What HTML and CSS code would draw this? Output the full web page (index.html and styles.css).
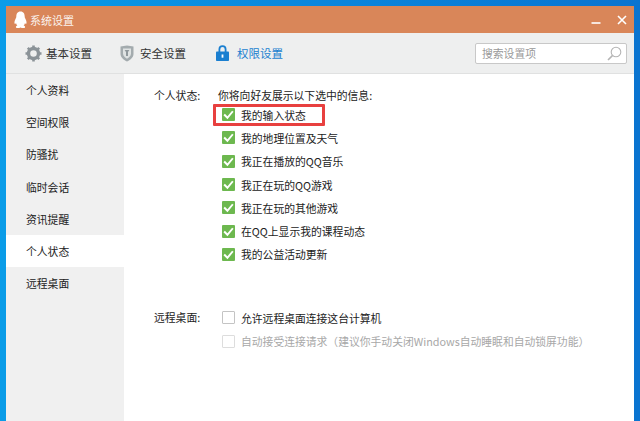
FILE: index.html
```html
<!DOCTYPE html>
<html lang="zh-CN">
  <head>
    <meta charset="UTF-8" />
    <meta name="viewport" content="width=device-width, initial-scale=1.0" />
    <title>系统设置</title>
    <link rel="stylesheet" href="styles.css">
  </head>
  <body>
    <div class="window">
      <div class="titlebar">
        <svg class="qq-logo" width="13" height="18" viewBox="0 0 13 18">
          <path d="M6.5 0.5C3.4 0.5 2.3 3 2.3 5.6C2.3 6.6 2 7 1.5 8C0.6 9.7 0.2 11.6 0.6 12.6C1 13.3 1.6 12.6 2 11.9C2.2 13 2.7 13.9 3.4 14.6C2.4 15 1.6 15.6 2 16.4C2.5 17.2 5 17.2 6.5 16.4C8 17.2 10.5 17.2 11 16.4C11.4 15.6 10.6 15 9.6 14.6C10.3 13.9 10.8 13 11 11.9C11.4 12.6 12 13.3 12.4 12.6C12.8 11.6 12.4 9.7 11.5 8C11 7 10.7 6.6 10.7 5.6C10.7 3 9.6 0.5 6.5 0.5Z" fill="#ffffff"/>
        </svg>
        <span class="title-text">系统设置</span>
        <div class="window-buttons">
          <svg width="10" height="10" viewBox="0 0 10 10"><path d="M0.5 8H9.5" stroke="#ffffff" stroke-width="1.6"/></svg>
          <svg width="10" height="10" viewBox="0 0 10 10"><path d="M1 1L9 9M9 1L1 9" stroke="#ffffff" stroke-width="1.6"/></svg>
        </div>
      </div>

      <div class="toolbar">
        <div class="tab tab-basic">
          <svg width="17" height="17" viewBox="0 0 17 17">
            <circle cx="8.5" cy="8.5" r="5" fill="none" stroke="#8b9398" stroke-width="3.4"/>
            <path d="M8.5 0.5V3M8.5 14V16.5M0.5 8.5H3M14 8.5H16.5M2.8 2.8L4.6 4.6M12.4 12.4L14.2 14.2M14.2 2.8L12.4 4.6M4.6 12.4L2.8 14.2" stroke="#8b9398" stroke-width="2.6"/>
          </svg>
          <span>基本设置</span>
        </div>
        <div class="tab tab-safe">
          <svg width="14" height="17" viewBox="0 0 14 17">
            <path d="M0.5 1.5L7 0.5L13.5 1.5V9C13.5 12.5 10 15 7 16.5C4 15 0.5 12.5 0.5 9Z" fill="#a3abae"/>
            <path d="M3 3.5H11V8.5C11 10.8 9 12.6 7 13.7C5 12.6 3 10.8 3 8.5Z" fill="#dfe3e3"/>
            <path d="M4.6 5H9.4L8 7V11H6V7Z" fill="#8f989c"/>
          </svg>
          <span>安全设置</span>
        </div>
        <div class="tab tab-active">
          <svg width="13" height="16" viewBox="0 0 13 16">
            <path d="M3.4 7V4.2C3.4 2.4 4.7 1.2 6.5 1.2S9.6 2.4 9.6 4.2V7" fill="none" stroke="#1a7fd0" stroke-width="1.8"/>
            <rect x="0" y="6.5" width="13" height="9.5" rx="0.8" fill="#1a7fd0"/>
            <rect x="5.6" y="9.5" width="1.8" height="3.2" fill="#ffffff"/>
          </svg>
          <span>权限设置</span>
        </div>
        <div class="search">
          <span>搜索设置项</span>
          <svg width="15" height="15" viewBox="0 0 15 15">
            <circle cx="9" cy="6" r="4.8" fill="none" stroke="#b4b4b4" stroke-width="1.1"/>
            <path d="M5.4 9.6L1 14" stroke="#b4b4b4" stroke-width="1.6"/>
          </svg>
        </div>
      </div>

      <div class="main">
        <ul class="sidebar">
          <li>个人资料</li>
          <li>空间权限</li>
          <li>防骚扰</li>
          <li>临时会话</li>
          <li>资讯提醒</li>
          <li class="current">个人状态</li>
          <li>远程桌面</li>
        </ul>

        <div class="content">
          <div class="section section-status">
            <div class="label">个人状态:</div>
            <div class="options">
              <div class="intro">你将向好友展示以下选中的信息:</div>
              <div class="option highlighted"><span class="check on"><svg width="13" height="13" viewBox="0 0 12 12"><path d="M2 6L5 9L10 3" fill="none" stroke="#ffffff" stroke-width="1.8"/></svg></span>我的输入状态</div>
              <div class="option"><span class="check on"><svg width="13" height="13" viewBox="0 0 12 12"><path d="M2 6L5 9L10 3" fill="none" stroke="#ffffff" stroke-width="1.8"/></svg></span>我的地理位置及天气</div>
              <div class="option"><span class="check on"><svg width="13" height="13" viewBox="0 0 12 12"><path d="M2 6L5 9L10 3" fill="none" stroke="#ffffff" stroke-width="1.8"/></svg></span>我正在播放的QQ音乐</div>
              <div class="option"><span class="check on"><svg width="13" height="13" viewBox="0 0 12 12"><path d="M2 6L5 9L10 3" fill="none" stroke="#ffffff" stroke-width="1.8"/></svg></span>我正在玩的QQ游戏</div>
              <div class="option"><span class="check on"><svg width="13" height="13" viewBox="0 0 12 12"><path d="M2 6L5 9L10 3" fill="none" stroke="#ffffff" stroke-width="1.8"/></svg></span>我正在玩的其他游戏</div>
              <div class="option"><span class="check on"><svg width="13" height="13" viewBox="0 0 12 12"><path d="M2 6L5 9L10 3" fill="none" stroke="#ffffff" stroke-width="1.8"/></svg></span>在QQ上显示我的课程动态</div>
              <div class="option"><span class="check on"><svg width="13" height="13" viewBox="0 0 12 12"><path d="M2 6L5 9L10 3" fill="none" stroke="#ffffff" stroke-width="1.8"/></svg></span>我的公益活动更新</div>
            </div>
          </div>

          <div class="section section-remote">
            <div class="label">远程桌面:</div>
            <div class="options">
              <div class="option"><span class="check"></span>允许远程桌面连接这台计算机</div>
              <div class="option disabled"><span class="check"></span>自动接受连接请求（建议你手动关闭Windows自动睡眠和自动锁屏功能）</div>
            </div>
          </div>
        </div>
      </div>
    </div>
  </body>
</html>
```

FILE: styles.css
```css
html,
body {
  height: 100%;
}

body {
  margin: 0;
  padding: 6px 6px 0;
  box-sizing: border-box;
  overflow: hidden;
  background: linear-gradient(90deg, #0a9ce8 0%, #0b86dc 50%, #0a74d0 100%);
  font-family: "Noto Sans CJK SC", "Liberation Sans", sans-serif;
  font-size: 10.8px;
  color: #222222;
}

.window {
  height: 100%;
  display: flex;
  flex-direction: column;
  background-color: #ffffff;
}

.titlebar {
  height: 27px;
  flex-shrink: 0;
  display: flex;
  align-items: center;
  padding: 0 7px 0 8px;
  background-color: #d98659;
  color: #ffffff;
}

.qq-logo {
  margin-right: 3px;
}

.title-text {
  font-size: 11px;
  opacity: 0.9;
}

.window-buttons {
  margin-left: auto;
  display: flex;
  gap: 16px;
}

.toolbar {
  height: 40px;
  flex-shrink: 0;
  display: flex;
  align-items: center;
  padding: 0 7px 0 19px;
  background-color: #eeefef;
  border-bottom: 1px solid #e0e1e1;
}

.tab {
  display: flex;
  align-items: center;
  font-size: 11.5px;
  color: #333333;
}

.tab-basic {
  width: 95px;
  gap: 4px;
}

.tab-safe {
  width: 96px;
  gap: 6px;
}

.tab-active {
  gap: 8px;
  color: #1a7fd0;
}

.search {
  margin-left: auto;
  width: 140px;
  height: 19px;
  display: flex;
  align-items: center;
  justify-content: space-between;
  padding: 0 4px 0 6px;
  background-color: #ffffff;
  border: 1px solid #c8c8c8;
  border-radius: 2px;
  color: #999999;
  font-size: 10.8px;
}

.main {
  flex: 1;
  display: flex;
  min-height: 0;
}

.sidebar {
  width: 118px;
  flex-shrink: 0;
  margin: 0;
  padding: 0;
  list-style: none;
  background-color: #f0f0f0;
}

.sidebar li {
  height: 32.2px;
  line-height: 32.2px;
  padding-left: 20px;
  font-size: 10.8px;
}

.sidebar li.current {
  background-color: #ffffff;
}

.content {
  flex: 1;
  padding-top: 12px;
  padding-left: 30px;
}

.section {
  display: flex;
}

.section-remote {
  margin-top: 40px;
}

.label {
  width: 64px;
  height: 23px;
  line-height: 18px;
  flex-shrink: 0;
}

.section-remote .label {
  line-height: 23px;
}

.intro {
  height: 17px;
  line-height: 18px;
}

.option {
  position: relative;
  height: 23.3px;
  display: flex;
  align-items: center;
  padding-left: 4px;
  white-space: nowrap;
}

.check {
  width: 13px;
  height: 13px;
  margin-right: 6px;
  flex-shrink: 0;
  display: flex;
  box-sizing: border-box;
  background-color: #ffffff;
  border: 1px solid #c4c4c4;
  border-radius: 1px;
}

.check.on {
  background-color: #6db84f;
  border: none;
}

.highlighted::after {
  content: "";
  position: absolute;
  left: -5px;
  top: 1px;
  width: 106px;
  height: 16px;
  border: 3px solid #e8403f;
  border-radius: 1px;
}

.disabled {
  color: #a8a8a8;
}

.disabled .check {
  border-color: #dddddd;
}
```
